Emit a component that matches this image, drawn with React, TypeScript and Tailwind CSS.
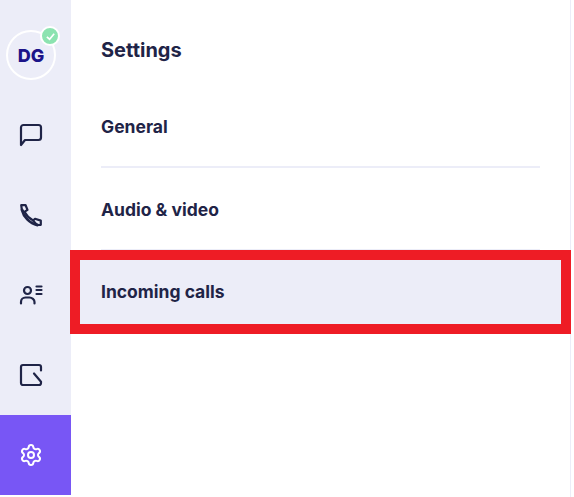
import { Settings } from "lucide-react";

const navIcon = "w-6 h-6 fill-none stroke-[#1f2447] stroke-[2.2]";

function ChatIcon() {
  return (
    <svg viewBox="0 0 24 24" className={navIcon} strokeLinejoin="round">
      <path d="M2 4.500A2.500 2.500 0 0 1 4.500 2h15A2.500 2.500 0 0 1 22 4.500v10a2.500 2.500 0 0 1-2.500 2.500H6l-4 5z" />
    </svg>
  );
}

function PhoneIcon() {
  return (
    <svg viewBox="0 0 24 24" className={navIcon} strokeLinejoin="round" strokeLinecap="round">
      <path d="M2.200 2.200 6.500 2 8.500 6.800 5 9.200 2.800 6.500z" />
      <path d="M3 7c1.500 6.500 7.500 13.500 15.500 15" strokeWidth="2.800" />
      <path d="M6 9.500c1.600 3 4 5.700 7.500 7.500" />
      <path d="M14 17.500 16 15.800l5.800 1.800v4.200L18 22z" />
    </svg>
  );
}

function ContactsIcon() {
  return (
    <svg viewBox="0 0 24 24" className={navIcon} strokeLinecap="round">
      <circle cx="8.500" cy="7.500" r="3.500" />
      <path d="M2 20.500v-1.500c0-2.500 2-4.500 4.500-4.500h4c2.500 0 5 2 5 4.500v1.500" />
      <path d="M17.500 3.500h5M17.500 7h5M17.500 11h5" />
    </svg>
  );
}

function NoteIcon() {
  return (
    <svg viewBox="0 0 24 24" className={navIcon} strokeLinecap="round" strokeLinejoin="round">
      <path d="M15 10.500 22 18.800V20a2 2 0 0 1-2 2H4a2 2 0 0 1-2-2V4a2 2 0 0 1 2-2h16a2 2 0 0 1 2 2v3.500" />
    </svg>
  );
}

function Sidebar() {
  return (
    <aside className="w-[71px] h-[495px] shrink-0 bg-[#ecedf8] flex flex-col">
      <div className="h-[95px] shrink-0 pt-[30px] pl-[6px]">
        <div className="relative w-[50px] h-[50px] rounded-full border-2 border-white flex items-center justify-center">
          <span className="text-[18px] font-extrabold text-[#1c1489]">DG</span>
          <span className="absolute -top-[6px] -right-[6px] w-[20px] h-[20px] rounded-full bg-[#8ce3b0] border-2 border-white flex items-center justify-center">
            <svg viewBox="0 0 12 12" className="w-[11px] h-[11px] fill-none stroke-white stroke-[1.8]">
              <path d="M2 6.500 5 9l5-6" />
            </svg>
          </span>
        </div>
      </div>
      <div className="h-20 shrink-0 flex items-center pl-[19px]"><ChatIcon /></div>
      <div className="h-20 shrink-0 flex items-center pl-[19px]"><PhoneIcon /></div>
      <div className="h-20 shrink-0 flex items-center pl-[19px]"><ContactsIcon /></div>
      <div className="h-20 shrink-0 flex items-center pl-[19px]"><NoteIcon /></div>
      <div className="h-20 shrink-0 flex items-center pl-[19px] bg-[#7856f5]">
        <Settings size={24} color="#ffffff" strokeWidth={2} />
      </div>
    </aside>
  );
}

export default function App() {
  return (
    <div className="w-[574px] h-[497px] bg-white overflow-hidden flex font-['Inter',sans-serif] text-[#1f2447]">
      <Sidebar />
      <main className="w-[500px] h-[497px] border-r border-[#ecedf8] flex flex-col">
        <h1 className="pl-[30px] pt-[38px] h-[87px] text-[20px] leading-6 font-bold">Settings</h1>
        <div className="px-[30px]">
          <div className="h-[81px] pt-[2px] flex items-center border-b-2 border-[#ecedf8] text-[17.500px] font-bold">General</div>
        </div>
        <div className="px-[30px]">
          <div className="h-[82px] pt-[4px] flex items-center border-b border-[#ecedf8] text-[17.500px] font-bold">Audio &amp; video</div>
        </div>
        <div className="-ml-px -mr-px h-[84px] pt-[1px] border-[10px] border-[#ee1c25] bg-[#ecedf8] pl-[21px] flex items-center text-[17.500px] font-bold">
          Incoming calls
        </div>
      </main>
    </div>
  );
}
